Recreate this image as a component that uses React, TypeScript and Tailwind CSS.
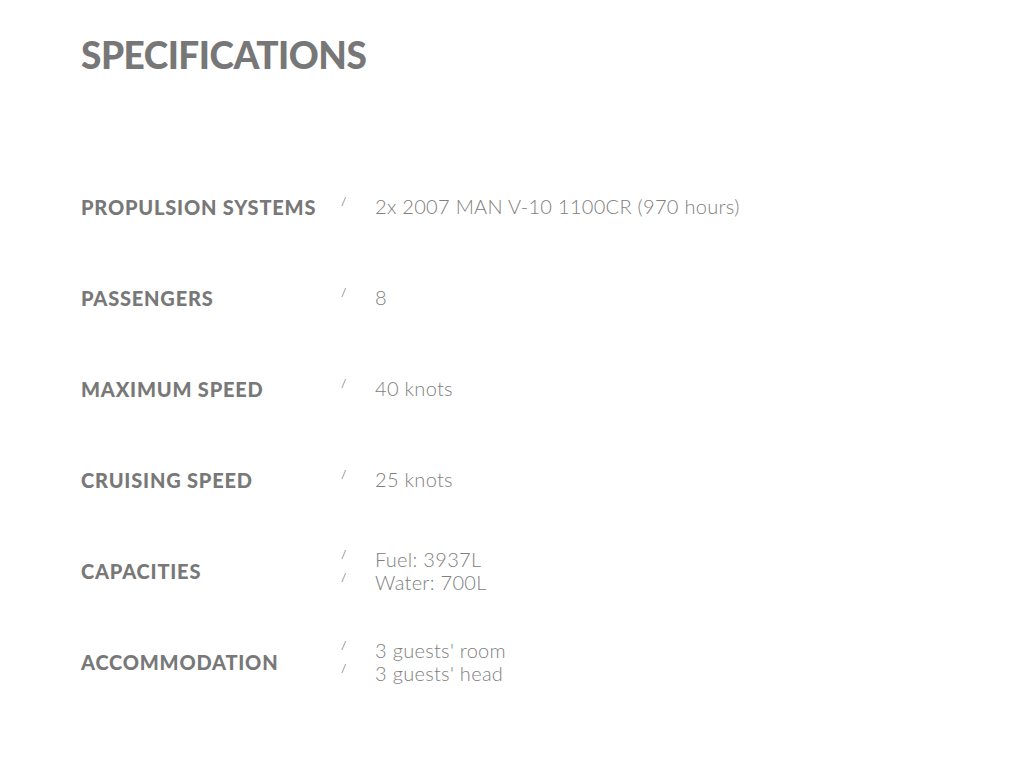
import React from 'react';

const specs: { label: string; values: string[] }[] = [
  { label: 'PROPULSION SYSTEMS', values: ['2x 2007 MAN V-10 1100CR (970 hours)'] },
  { label: 'PASSENGERS', values: ['8'] },
  { label: 'MAXIMUM SPEED', values: ['40 knots'] },
  { label: 'CRUISING SPEED', values: ['25 knots'] },
  { label: 'CAPACITIES', values: ['Fuel: 3937L', 'Water: 700L'] },
  { label: 'ACCOMMODATION', values: ["3 guests' room", "3 guests' head"] },
];

const App = () => {
  return (
    <div className="w-[1024px] h-[768px] bg-white font-['Lato',sans-serif] overflow-hidden">
      <div className="pl-[81px] pt-[36px]">
        <h1 className="text-[37px] leading-[37px] font-black text-[#777777] tracking-[-0.5px]">SPECIFICATIONS</h1>

        <div className="mt-[88px] flex flex-col">
          {specs.map((s) => (
            <div key={s.label} className="h-[91px] flex items-center">
              <div className="w-[260px] text-[20px] font-black text-[#787878] tracking-[0.8px]">{s.label}</div>
              <div className="flex flex-col">
                {s.values.map((v) => (
                  <div key={v} className="flex h-[23px] items-center">
                    <span className="w-[34px] self-start pt-[1px] text-[12px] leading-[12px] text-[#8a8a8a]">/</span>
                    <span className="text-[20px] leading-[23px] font-light text-[#808080] tracking-[0.3px]">{v}</span>
                  </div>
                ))}
              </div>
            </div>
          ))}
        </div>
      </div>
    </div>
  );
};

export default App;
